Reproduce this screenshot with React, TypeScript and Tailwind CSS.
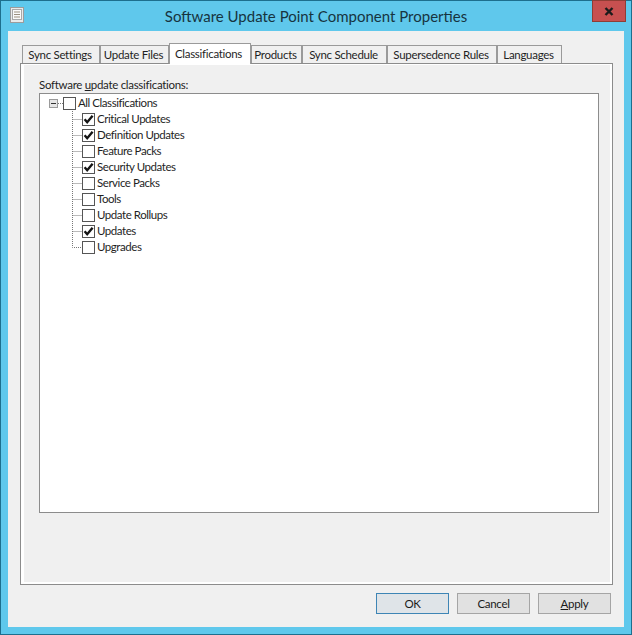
import React from "react";

const font = "font-['Lato',sans-serif]";

const tabs = [
  { label: "Sync Settings", width: "w-[78px]" },
  { label: "Update Files", width: "w-[69px]" },
  { label: "Classifications", width: "w-[82px]", active: true },
  { label: "Products", width: "w-[51px]" },
  { label: "Sync Schedule", width: "w-[85px]" },
  { label: "Supersedence Rules", width: "w-[110px]" },
  { label: "Languages", width: "w-[65px]" },
];

const items = [
  { label: "Critical Updates", checked: true },
  { label: "Definition Updates", checked: true },
  { label: "Feature Packs" },
  { label: "Security Updates", checked: true },
  { label: "Service Packs" },
  { label: "Tools" },
  { label: "Update Rollups" },
  { label: "Updates", checked: true },
  { label: "Upgrades", last: true },
];

const Checkbox = ({ checked }: { checked?: boolean }) => (
  <span className="relative block h-[13px] w-[13px] shrink-0 border border-[#555] bg-white">
    {checked && (
      <svg className="absolute left-0 top-0" width="11" height="11" viewBox="0 0 11 11">
        <path d="M1.6 5.2 L4.2 8.2 L9.6 1.8" fill="none" stroke="#141414" strokeWidth="2.4" />
      </svg>
    )}
  </span>
);

const TreeItem = ({ label, checked, last }: { label: string; checked?: boolean; last?: boolean }) => (
  <div className="flex h-4 items-center">
    <svg className="shrink-0" width="10" height="16" viewBox="0 0 10 16">
      <path
        d={last ? "M0.5 0 V8.5 H10" : "M0.5 0 V16 M0.5 8.5 H10"}
        fill="none"
        stroke="#777"
        strokeDasharray="1 1"
      />
    </svg>
    <Checkbox checked={checked} />
    <span className="ml-[2px] whitespace-nowrap leading-4 tracking-[-0.45px]">{label}</span>
  </div>
);

const FooterButton = ({ label, primary }: { label: React.ReactNode; primary?: boolean }) => (
  <button
    className={`flex h-[21px] w-[73px] items-center justify-center border text-[11.5px] tracking-[-0.3px] text-[#1a1a1a] ${
      primary ? "border-[#3e85b5] bg-[#dfe4e8]" : "border-[#a5a5a5] bg-[#e1e1e1]"
    }`}
  >
    {label}
  </button>
);

export default function App() {
  return (
    <div className={`flex h-[635px] w-[632px] flex-col border border-[#1d6f8e] bg-[#5fc8ec] px-[7px] pb-[7px] ${font}`}>
      {/* title bar */}
      <div className="relative flex h-[30px] shrink-0 items-center justify-center">
        <svg className="absolute left-[2px] top-[6px]" width="14" height="16" viewBox="0 0 14 16">
          <rect x="0.5" y="0.5" width="13" height="15" fill="#e9eaea" stroke="#9c9c9c" />
          <rect x="2.5" y="2.5" width="9" height="10" fill="#fafafa" stroke="#a8a8a8" />
          <path d="M4 5 H10 M4 7.5 H10 M4 10 H10" stroke="#9a8f7f" />
        </svg>
        <span className="text-[15px] text-[#17343f]">Software Update Point Component Properties</span>
        <div className="absolute -top-px right-[-2px] flex h-[22px] w-[34px] items-center justify-center border border-[#8f3d35] bg-[#c75050]">
          <svg width="10" height="9" viewBox="0 0 10 9">
            <path d="M1.5 1 L8.5 8 M8.5 1 L1.5 8" stroke="#1b1b1b" strokeWidth="2.4" />
          </svg>
        </div>
      </div>

      {/* client area */}
      <div className="flex flex-1 flex-col bg-[#f0f0f0] pl-3 pr-[11px] pt-3 text-[11.5px] tracking-[-0.3px] text-[#1f1f1f]">
        <div className="flex h-5 items-end pl-[2px]">
          {tabs.map((tab) =>
            tab.active ? (
              <div
                key={tab.label}
                className={`${tab.width} relative z-10 -mb-px flex h-[21px] shrink-0 items-start justify-center whitespace-nowrap border-x border-t border-[#9a9a9a] bg-white pr-[3px] pt-px`}
              >
                {tab.label}
              </div>
            ) : (
              <div
                key={tab.label}
                className={`${tab.width} flex h-[18px] shrink-0 items-center justify-center whitespace-nowrap border-l border-r border-t border-[#9a9a9a] bg-[#f0f0f0] pr-[2px]`}
              >
                {tab.label}
              </div>
            )
          )}
        </div>

        <div className="flex h-[522px] flex-col border border-[#8c8c8c] bg-white pb-[2px] pl-[3px] pr-[2px] pt-px">
          <div className="flex flex-1 flex-col bg-[#f0f0f0] pl-[15px] pr-[11px] pt-3">
            <div className="h-4 leading-4">
              Software <span className="underline">u</span>pdate classifications:
            </div>
            <div className="h-[420px] border border-[#8c8c8c] bg-white pl-[9px] pt-[1px]">
              <div className="flex h-4 items-center">
                <span className="flex h-[9px] w-[9px] shrink-0 items-center justify-center border border-[#9a9a9a] bg-[#e6e6e6]">
                  <span className="h-px w-[5px] bg-[#333]" />
                </span>
                <svg className="shrink-0" width="5" height="16" viewBox="0 0 5 16">
                  <path d="M0 8.5 H5" stroke="#777" strokeDasharray="1 1" />
                </svg>
                <Checkbox />
                <span className="ml-[2px] whitespace-nowrap leading-4 tracking-[-0.45px]">All Classifications</span>
              </div>
              <div className="pl-[23px]">
                {items.map((item) => (
                  <TreeItem key={item.label} {...item} />
                ))}
              </div>
            </div>
          </div>
        </div>

        <div className="flex flex-1 items-start justify-end gap-2 pr-[2px] pt-2">
          <FooterButton label="OK" primary />
          <FooterButton label="Cancel" />
          <FooterButton
            label={
              <>
                <span className="underline">A</span>pply
              </>
            }
          />
        </div>
      </div>
    </div>
  );
}
